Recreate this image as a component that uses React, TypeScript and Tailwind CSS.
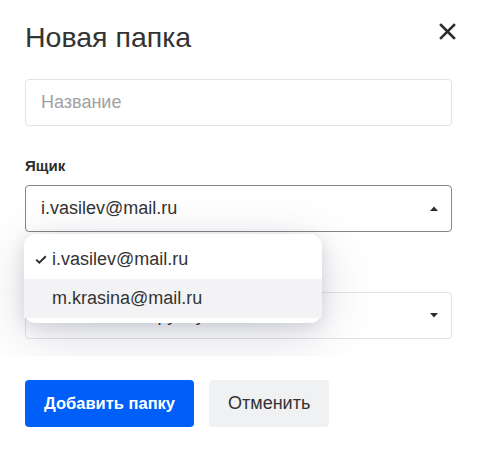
import React from "react";

function Caret({ up }: { up?: boolean }) {
  return (
    <svg width="8" height="5" viewBox="0 0 8 5" className="shrink-0">
      {up ? <path d="M0 5 L4 0.5 L8 5 Z" fill="#2c2d2e" /> : <path d="M0 0 L4 4.5 L8 0 Z" fill="#2c2d2e" />}
    </svg>
  );
}

export default function App() {
  return (
    <div className="w-[480px] h-[451px] bg-white font-['Liberation_Sans',Arial,sans-serif] text-[#2c2d2e] overflow-hidden">
      <div className="flex items-start justify-between pl-[25px] pr-[24px] pt-[21px]">
        <h1 className="text-[28.5px] leading-[32px] text-[#333]">Новая папка</h1>
        <button className="mt-[2px] w-[17px] h-[17px] flex items-center justify-center">
          <svg width="17" height="17" viewBox="0 0 17 17">
            <path d="M2 2 L15 15 M15 2 L2 15" stroke="#2c2d2e" strokeWidth="2.6" strokeLinecap="square" />
          </svg>
        </button>
      </div>

      <div className="pr-[28px] pl-[25px] mt-[26px]">
        <div className="h-[47px] border border-[#e2e3e6] rounded-[4px] pl-[15px] flex items-center text-[18px] text-[#a0a1a5]">
          Название
        </div>
      </div>

      <div className="overflow-hidden pl-[25px] pr-[28px] pt-[30px] pb-[17px]">
        <div className="text-[15px] leading-[20px] font-bold text-[#2c2d2e]">Ящик</div>
        <div className="relative mt-[9px]">
          <div className="h-[47px] border border-[#85868a] rounded-[4px] pl-[15px] pr-[13px] flex items-center justify-between text-[18px] text-[#333]">
            <span>i.vasilev@mail.ru</span>
            <Caret up />
          </div>
          <div className="absolute z-10 left-[-1px] top-[calc(100%+2px)] w-[298px] bg-white rounded-[12px] py-[6px] pb-[5px] shadow-[0_4px_16px_rgba(0,16,61,0.12),0_12px_56px_rgba(0,16,61,0.15)] text-[18px] text-[#333]">
            <div className="h-[39px] flex items-center pl-[11px]">
              <svg width="12" height="9" viewBox="0 0 12 9" className="mr-[5px]">
                <path d="M1.2 4.6 L4.3 7.6 L10.8 1.2" stroke="#2c2d2e" strokeWidth="2" fill="none" />
              </svg>
              <span>i.vasilev@mail.ru</span>
            </div>
            <div className="h-[39px] flex items-center pl-[28px] bg-[#f3f3f5]">
              <span>m.krasina@mail.ru</span>
            </div>
          </div>
        </div>
        <div className="mt-[31px] text-[15px] leading-[20px] font-bold text-[#2c2d2e]">Положить в папку</div>
        <div className="mt-[9px] h-[47px] border border-[#e2e3e6] rounded-[4px] pl-[15px] pr-[13px] flex items-center justify-between text-[18px] text-[#333]">
          <span>Поместить в группу</span>
          <Caret />
        </div>
      </div>

      <div className="flex gap-[15px] pl-[25px] pt-[24px]">
        <button className="h-[47px] px-[19px] rounded-[4px] bg-[#005ff9] text-white text-[16.5px] font-bold">
          Добавить папку
        </button>
        <button className="h-[47px] px-[19px] rounded-[4px] bg-[#f0f1f3] text-[#333] text-[18px]">
          Отменить
        </button>
      </div>
    </div>
  );
}
